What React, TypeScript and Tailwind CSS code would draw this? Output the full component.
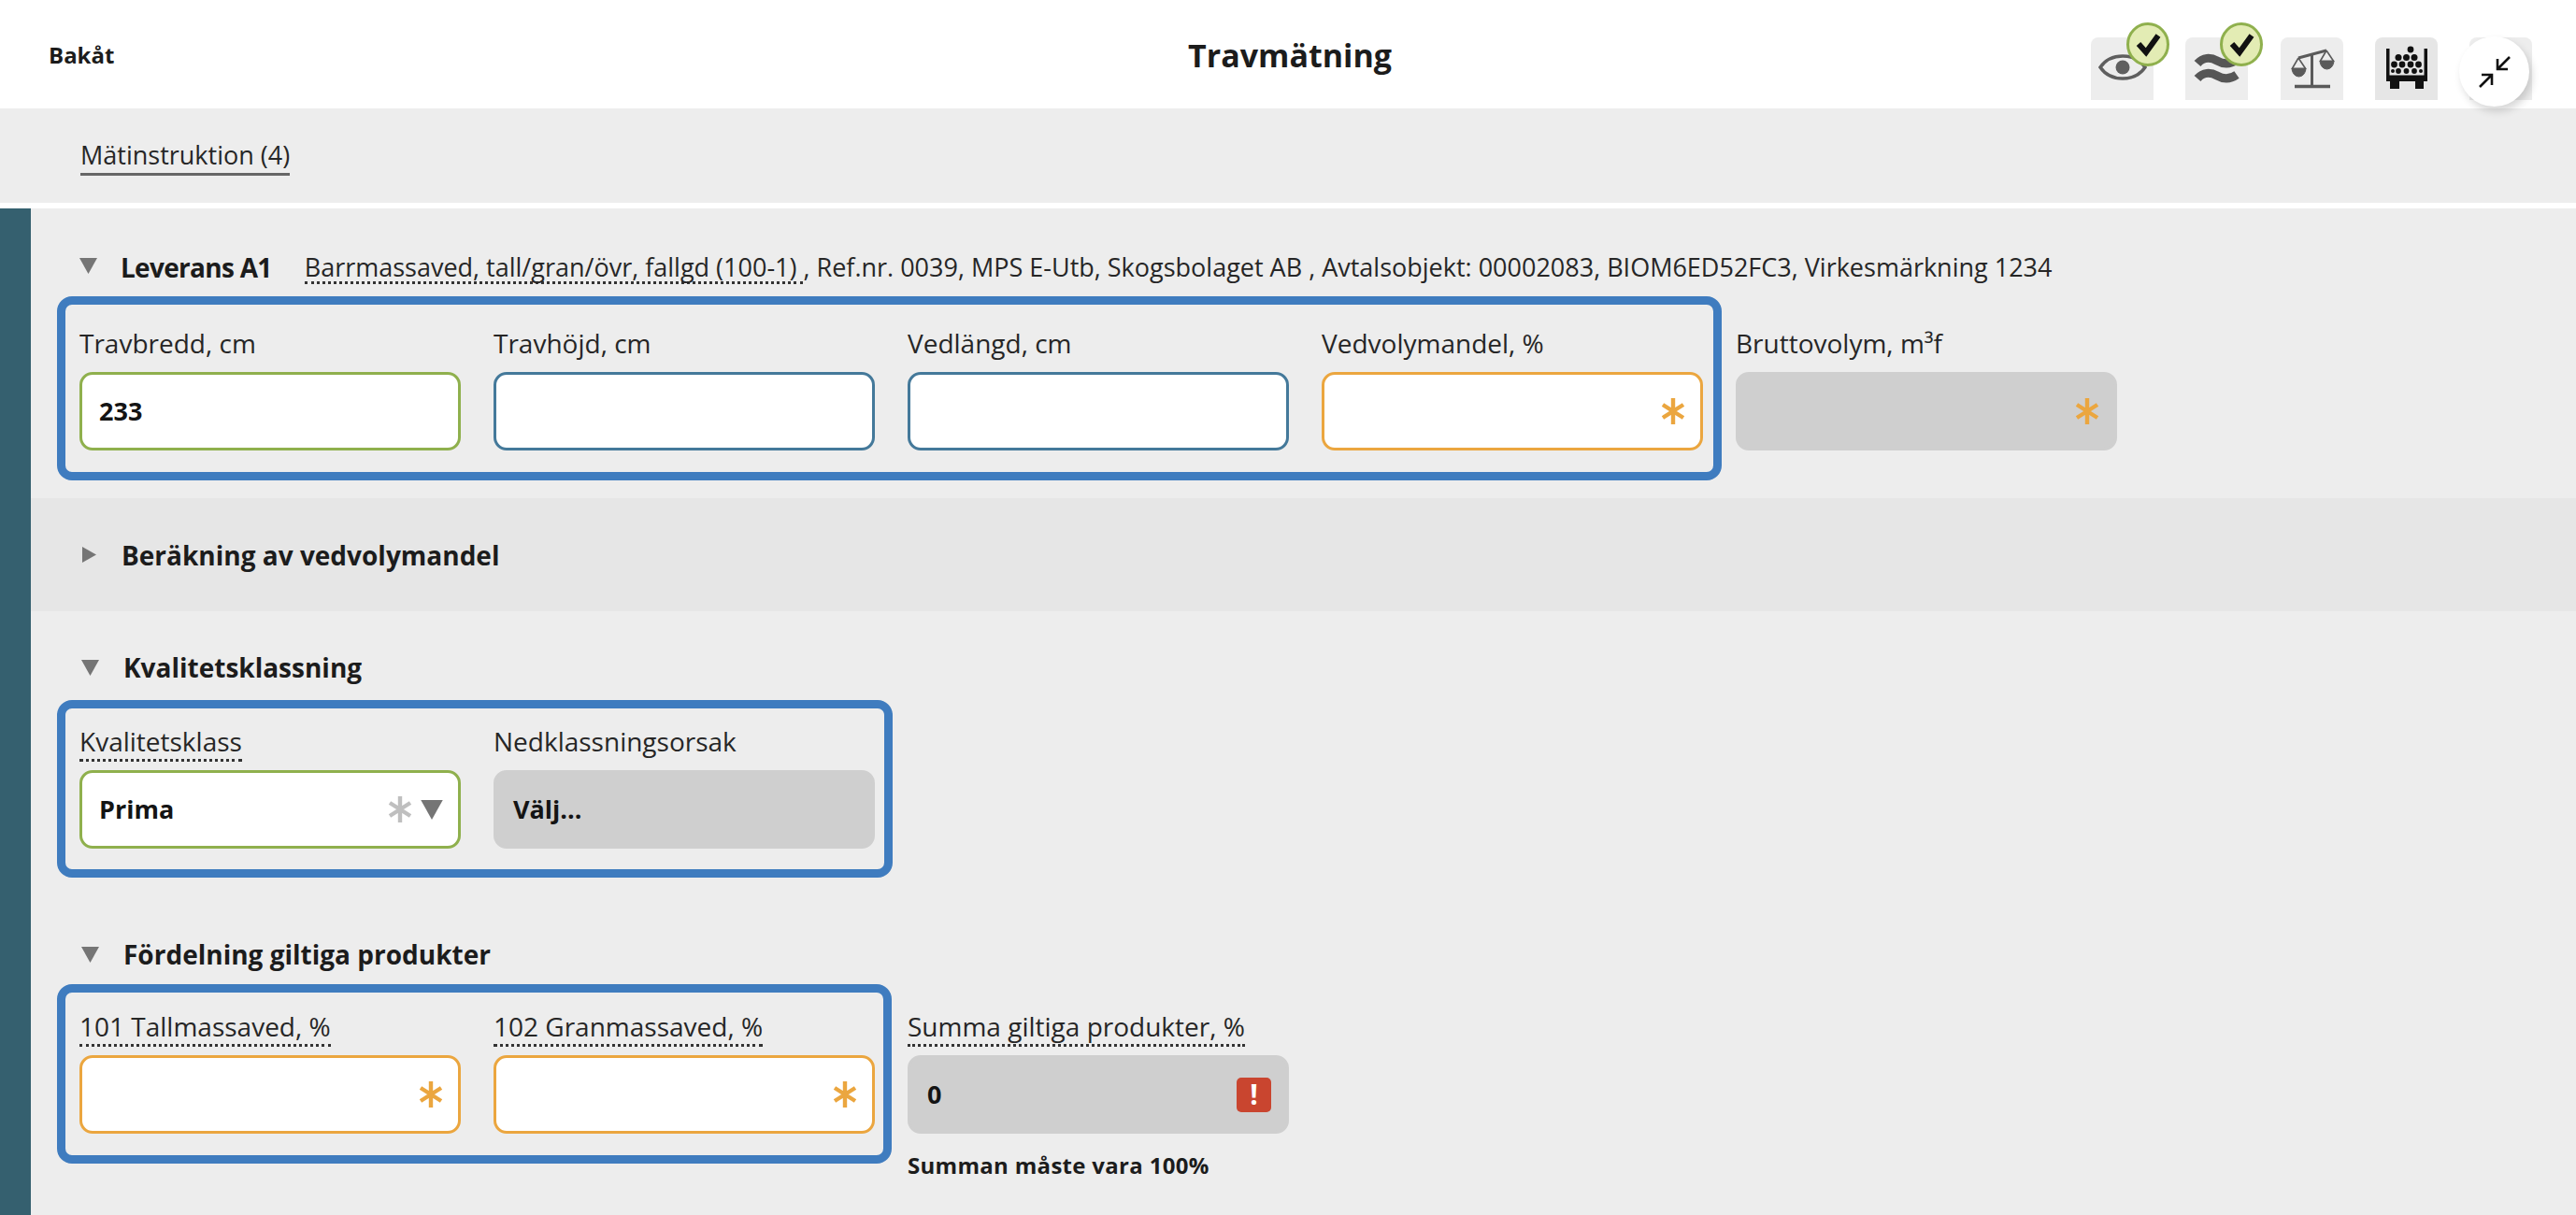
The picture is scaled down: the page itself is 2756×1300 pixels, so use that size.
import React from "react";

const font = "font-['Open_Sans',sans-serif]";

function Star({ color = "#eba63f" }: { color?: string }) {
  return (
    <svg width="26" height="28" viewBox="0 0 26 28" fill="none" stroke={color} strokeWidth="4.4">
      <path d="M13 0V28M2 7L24 21M24 7L2 21" />
    </svg>
  );
}

function Tri({ dir = "down", w = 19, h = 17 }: { dir?: "down" | "right"; w?: number; h?: number }) {
  return (
    <svg width={w} height={h} viewBox="0 0 19 17" fill="#757575" className="shrink-0">
      {dir === "down" ? <path d="M0 0H19L9.5 17Z" /> : <path d="M2 0L17 8.5L2 17Z" />}
    </svg>
  );
}

function Field({
  label,
  dotted,
  border,
  value,
  star,
  children,
}: {
  label: string;
  dotted?: boolean;
  border: string;
  value?: string;
  star?: boolean;
  children?: React.ReactNode;
}) {
  return (
    <div className="w-[408px] shrink-0">
      <div className="h-[47px] flex items-start">
        <span
          className={
            "text-[28px] leading-[33px] h-[38px] text-[#262626] " +
            (dotted ? "border-b-[3px] border-dotted border-[#333333]" : "")
          }
        >
          {label}
        </span>
      </div>
      <div className={"h-[84px] rounded-[14px] flex items-center justify-between pl-[18px] pr-[16px] " + border}>
        <span className="text-[27px] font-bold text-[#141414]">{value}</span>
        <span className="flex items-center">
          {star && <Star />}
          {children}
        </span>
      </div>
    </div>
  );
}

const GREEN = "bg-white border-[3px] border-[#8fb04d]";
const TEAL = "bg-white border-[3px] border-[#44799a]";
const ORANGE = "bg-white border-[3px] border-[#eba63f]";
const GREY = "bg-[#cfcfcf] border-[3px] border-[#cfcfcf]";

function Box({ children, className }: { children: React.ReactNode; className: string }) {
  return (
    <div className={"border-[9px] border-[#3f7cbf] rounded-[16px] pl-[15px] flex gap-[35px] " + className}>
      {children}
    </div>
  );
}

function SectionHead({ title, className }: { title: string; className: string }) {
  return (
    <div className={"flex items-center gap-[26px] pl-[54px] " + className}>
      <Tri />
      <span className="text-[28px] font-bold text-[#1c1c1c]">{title}</span>
    </div>
  );
}

function Tile({ dark, children, badge }: { dark?: boolean; children?: React.ReactNode; badge?: string }) {
  return (
    <div className={"relative w-[67px] h-[67px] rounded-t-[8px] shrink-0 " + (dark ? "bg-[#e6e6e6]" : "bg-[#ededed]")}>
      {children}
      {badge && (
        <div className={"absolute top-[-16px] w-[46px] h-[47px] " + badge}>
          <svg width="46" height="47" viewBox="0 0 46 47" fill="none">
            <ellipse cx="23" cy="23.5" rx="21.5" ry="22" fill="#e3ecb4" stroke="#8fb04d" strokeWidth="3" />
            <path d="M13 23L21 32L34 14" stroke="#111111" strokeWidth="6" />
          </svg>
        </div>
      )}
    </div>
  );
}

export default function App() {
  return (
    <div className={"w-[2756px] h-[1300px] overflow-hidden bg-white flex flex-col " + font}>
      <header className="h-[116px] shrink-0 grid grid-cols-[1fr_auto_1fr] items-center bg-white">
        <div className="pl-[52px] text-[24px] font-bold text-[#1c1c1c] pt-[2px]">Bakåt</div>
        <h1 className="text-[34px] font-bold text-[#1c1c1c] pl-[4px] pt-[2px]">Travmätning</h1>
        <div className="relative justify-self-end flex items-start gap-[34.25px] pr-[47px] pt-[40px] h-[116px]">
          <Tile badge="left-[38px]">
            <svg className="absolute inset-0" width="67" height="67" viewBox="0 0 67 67" fill="none">
              <path d="M10 32C21 16 47 16 58 32C47 48 21 48 10 32Z" stroke="#5f5f5f" strokeWidth="3.5" />
              <circle cx="34" cy="32" r="7.5" fill="#5f5f5f" />
            </svg>
          </Tile>
          <Tile badge="left-[37px]">
            <svg className="absolute inset-0" width="67" height="67" viewBox="0 0 67 67" fill="none" stroke="#565656" strokeWidth="9">
              <path d="M13 28C19 21 27 21 34 25C41 29 48 29 55 24" />
              <path d="M13 44C19 37 27 37 34 41C41 45 48 45 55 40" />
            </svg>
          </Tile>
          <Tile>
            <svg className="absolute inset-0" width="67" height="67" viewBox="0 0 67 67" fill="none" stroke="#5a5a5a">
              <path d="M33.5 19V52" strokeWidth="3" />
              <path d="M15 52.5H53" strokeWidth="3.5" />
              <path d="M19 22L49 14" strokeWidth="3" />
              <path d="M19 22L12 34M19 22L27 34M49 14L42 26M49 14L57 26" strokeWidth="1.6" />
              <path d="M12 33H27A7.5 9 0 0 1 12 33Z" fill="#5a5a5a" strokeWidth="1" />
              <path d="M42 25H57A7.5 9 0 0 1 42 25Z" fill="#5a5a5a" strokeWidth="1" />
            </svg>
          </Tile>
          <Tile dark>
            <svg className="absolute inset-0" width="67" height="67" viewBox="0 0 67 67" fill="#111111">
              <path d="M12 12H15.5V40.5H52.5V12H56V47H52V55H43V47H26V55H16V47H12Z" />
              <circle cx="38" cy="13" r="3.4" />
              <circle cx="25" cy="21.5" r="3.5" />
              <circle cx="33.5" cy="21.5" r="3.5" />
              <circle cx="42" cy="21.5" r="3.5" />
              <circle cx="20.5" cy="29" r="3.4" />
              <circle cx="29" cy="29" r="3.4" />
              <circle cx="38" cy="29" r="3.4" />
              <circle cx="46.5" cy="29" r="3.4" />
              <circle cx="25" cy="36" r="2.9" />
              <circle cx="33.5" cy="36" r="2.9" />
              <circle cx="42" cy="36" r="2.9" />
              <circle cx="19" cy="36" r="2" />
              <circle cx="49" cy="36" r="2" />
            </svg>
          </Tile>
          <Tile />
          <button className="absolute left-[394px] top-[39px] w-[75px] h-[75px] rounded-full bg-white shadow-[3px_5px_9px_rgba(0,0,0,0.16)] flex items-center justify-center">
            <svg width="34" height="34" viewBox="0 0 34 34" fill="none" stroke="#111111" strokeWidth="2.6">
              <path d="M33 1L20 14M20 3V14H31" />
              <path d="M1 33L14 20M14 31V20H3" />
            </svg>
          </button>
        </div>
      </header>

      <div className="h-[101px] shrink-0 bg-[#ededed] pl-[86px] pt-[31px]">
        <span className="inline-block h-[41px] text-[27px] leading-[37px] text-[#262626] border-b-[3px] border-[#666666]">
          Mätinstruktion (4)
        </span>
      </div>
      <div className="h-[6px] shrink-0 bg-white" />

      <div className="flex-1 flex min-h-0">
        <aside className="w-[33px] shrink-0 bg-[#35606f]" />
        <main className="flex-1 bg-[#ededed] flex flex-col">
          <div className="h-[310px] shrink-0 pt-[44px]">
            <div className="flex items-start pl-[52px] h-[36px]">
              <span className="mt-[9px]">
                <Tri />
              </span>
              <span className="ml-[25px] text-[28px] leading-[38px] font-bold tracking-[-0.7px] text-[#1c1c1c]">Leverans A1</span>
              <span className="ml-[35px] text-[27px] leading-[38px] text-[#262626] whitespace-pre">
                <span className="inline-block h-[37px] border-b-[3px] border-dotted border-[#333333]">Barrmassaved, tall/gran/övr, fallgd (100-1) </span>
                , Ref.nr. 0039, MPS E-Utb, Skogsbolaget AB , Avtalsobjekt: 00002083, BIOM6ED52FC3, Virkesmärkning 1234
              </span>
            </div>
            <div className="flex items-start ml-[28px] mt-[14px]">
              <Box className="w-[1781px] h-[197px] pt-[25px]">
                <Field label="Travbredd, cm" border={GREEN} value="233" />
                <Field label="Travhöjd, cm" border={TEAL} />
                <Field label="Vedlängd, cm" border={TEAL} />
                <Field label="Vedvolymandel, %" border={ORANGE} star />
              </Box>
              <div className="ml-[15px] pt-[34px]">
                <Field label="Bruttovolym, m³f" border={GREY} star />
              </div>
            </div>
          </div>

          <div className="h-[121px] shrink-0 bg-[#e6e6e6] flex items-center gap-[25px] pl-[53px]">
            <Tri dir="right" />
            <span className="text-[28px] font-bold text-[#1c1c1c]">Beräkning av vedvolymandel</span>
          </div>

          <SectionHead title="Kvalitetsklassning" className="h-[34px] mt-[43px] shrink-0" />
          <div className="ml-[28px] mt-[18px] shrink-0">
            <Box className="w-[894px] h-[190px] pt-[19px]">
              <Field label="Kvalitetsklass" dotted border={GREEN} value="Prima">
                <span className="mr-[9px]"><Star color="#bfbfbf" /></span>
                <Tri w={24} h={21} />
              </Field>
              <Field label="Nedklassningsorsak" border={GREY} value="Välj..." />
            </Box>
          </div>

          <SectionHead title="Fördelning giltiga produkter" className="h-[34px] mt-[65px] shrink-0" />
          <div className="flex items-start ml-[28px] mt-[15px] shrink-0">
            <Box className="w-[893px] h-[192px] pt-[20px]">
              <Field label="101 Tallmassaved, %" dotted border={ORANGE} star />
              <Field label="102 Granmassaved, %" dotted border={ORANGE} star />
            </Box>
            <div className="ml-[17px] pt-[29px]">
              <Field label="Summa giltiga produkter, %" dotted border={GREY} value="0">
                <span className="w-[37px] h-[37px] rounded-[5px] bg-[#c9452f] flex items-center justify-center text-white font-bold text-[30px] leading-none">!</span>
              </Field>
              <div className="mt-[21px] text-[24px] leading-[26px] font-bold tracking-[0.3px] text-[#1c1c1c]">Summan måste vara 100%</div>
            </div>
          </div>
        </main>
      </div>
    </div>
  );
}
